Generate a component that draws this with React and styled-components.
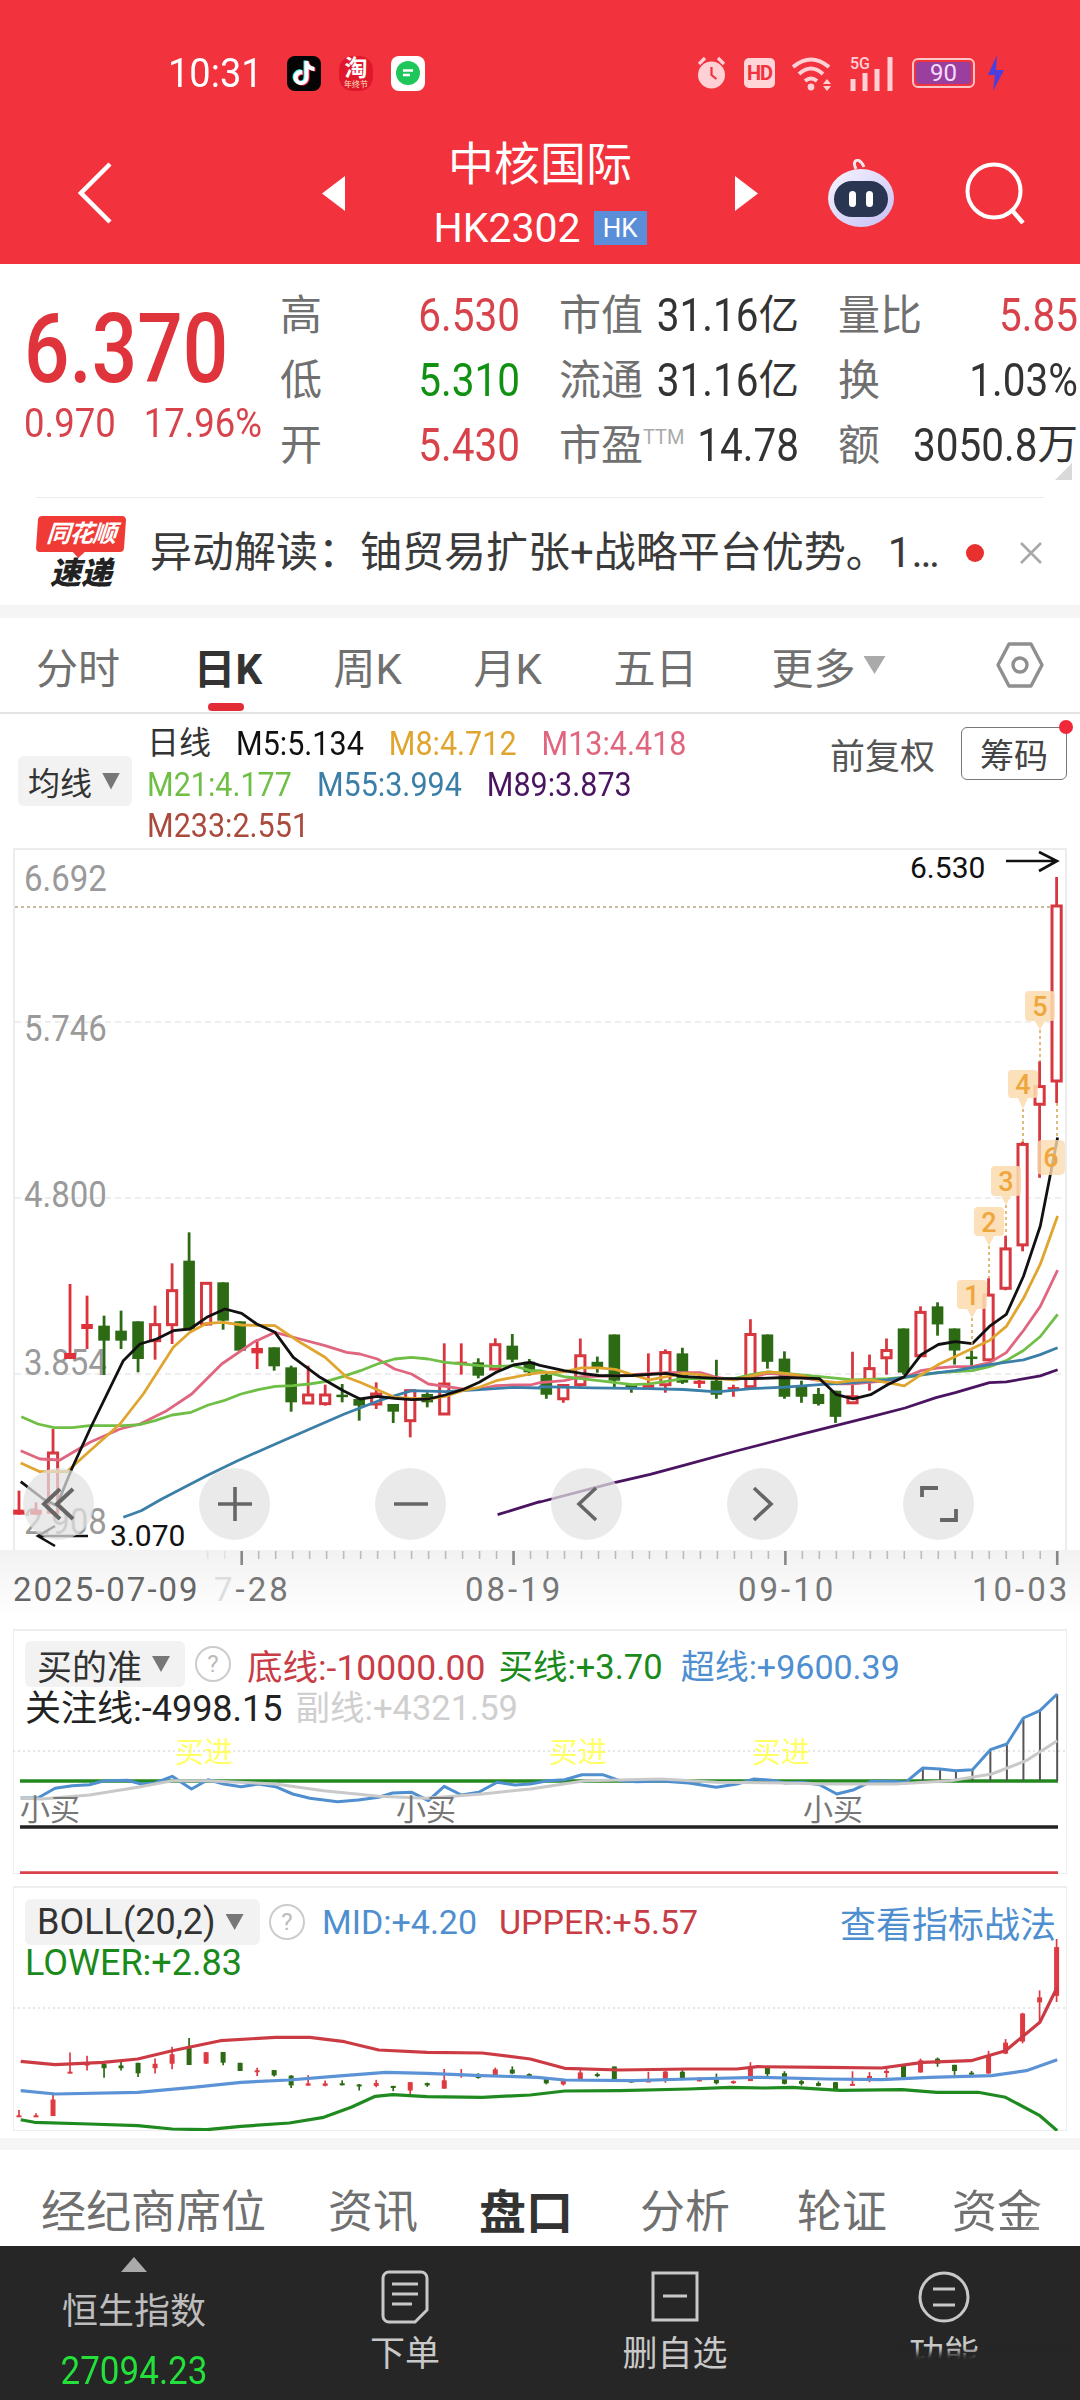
import React from "react";
import styled, { createGlobalStyle } from "styled-components";

const Global = createGlobalStyle`
  html, body { margin: 0; padding: 0; background: #fff; }
  body { font-family: Roboto, "Noto Sans CJK SC", sans-serif; }
  #root { width: 1080px; height: 2400px; }
  * { box-sizing: border-box; }
`;

const Page = styled.div`
  position: relative; width: 1080px; height: 2400px; overflow: hidden;
  display: flex; flex-direction: column; background: #fff;
`;

/* ---------- header ---------- */
const Header = styled.header`
  height: 264px; background: #f2323c; color: #fff; padding-top: 55px;
  display: flex; flex-direction: column; flex: none;
`;
const StatusBar = styled.div`
  display: flex; align-items: center; height: 36px; padding: 0 75px 0 168px;
`;
const Time = styled.span`
  width: 92px; margin-right: 27px; font-size: 38px; line-height: 36px; color: #fff;
  display: inline-block; transform: scaleY(1.08); white-space: nowrap;
`;
const AppTile = styled.div`
  width: ${p => p.$w || 34}px; height: 35px; border-radius: ${p => p.$r || 8}px; margin-right: ${p => p.$mr || 18}px;
  background: ${p => p.$bg}; display: flex; flex-direction: column; align-items: center; justify-content: center;
  flex: none; overflow: hidden;
`;
const TaoMain = styled.span`
  font-size: 23px; line-height: 24px; font-weight: 700; color: #fff;
`;
const TaoSub = styled.span`
  font-size: 8px; line-height: 8px; color: #ffe6c8; white-space: nowrap;
`;
const StatusRight = styled.div`
  margin-left: auto; display: flex; align-items: center;
`;
const StatusIcon = styled.svg`
  display: block; flex: none; margin-left: ${p => p.$ml || 0}px;
`;
const HdBadge = styled.span`
  width: 31px; height: 30px; margin-left: 17px; background: #ffd5d8; color: #f2323c; border-radius: 5px;
  font-size: 20px; font-weight: 700; display: flex; align-items: center; justify-content: center; letter-spacing: -1px;
`;
const Battery = styled.div`
  width: 63px; height: 30px; margin-left: 17px; border: 2px solid #ffc4c8; border-radius: 6px; padding: 2px;
  display: flex; position: relative;
`;
const BatteryFill = styled.span`
  flex: 1; background: #9a3f9e; border-radius: 3px; color: #f3dcff; font-size: 24px; line-height: 22px; text-align: center;
`;
const NavBar = styled.div`
  margin-top: 47px; display: flex; align-items: center; height: 110px; padding-left: 78px;
`;
const NavIcon = styled.svg`
  display: block; flex: none; margin-left: ${p => p.$ml || 0}px;
`;
const NavCenter = styled.div`
  width: 390px; display: flex; flex-direction: column; align-items: center; flex: none;
`;
const NavTitle = styled.div`
  font-size: 46px; line-height: 52px; color: #fff; white-space: nowrap;
`;
const NavSub = styled.div`
  margin-top: 18px; height: 40px; display: flex; align-items: center; gap: 13px;
`;
const Code = styled.span`
  font-size: 41px; color: #fff; display: inline-block; white-space: nowrap;
`;
const MarketTag = styled.span`
  width: 53px; height: 34px; background: #5b8ed8; color: #fff; font-size: 26px; line-height: 34px; text-align: center;
`;

/* ---------- quote ---------- */
const Quote = styled.section`
  position: relative; height: 233px; display: flex; flex: none;
`;
const PriceCol = styled.div`
  width: 280px; flex: none; padding: 46px 0 0 24px; display: flex; flex-direction: column;
`;
const BigPrice = styled.span`
  font-size: 80px; line-height: 80px; font-weight: 500; color: #e0343c; display: block;
  transform: scaleY(1.2); width: 205px; text-align: left;
`;
const ChangeRow = styled.div`
  margin-top: 14px; display: flex; gap: 28px; color: #d8434b; font-size: 36.5px; line-height: 40px;
`;
const Num = styled.span`
  display: inline-block; transform: scaleY(${p => p.$sy || 1.12}); white-space: nowrap;
`;
const StatGrid = styled.div`
  display: grid; grid-template-columns: 240px 240px 240px; column-gap: 39px;
  grid-auto-rows: 65px; padding-top: 19px;
`;
const Stat = styled.div`
  display: flex; align-items: center; justify-content: space-between; white-space: nowrap;
`;
const StatLabel = styled.span`
  font-size: 42px; line-height: 65px; color: #707070;
`;
const Ttm = styled.sup`
  font-size: 20px; color: #aaa; vertical-align: 16px; line-height: 0;
`;
const StatValue = styled.span`
  font-size: 40.5px; line-height: 65px; color: ${p => p.$c || "#333"}; display: inline-flex; align-items: center;
`;
const CornerMark = styled.svg`
  position: absolute; right: 8px; bottom: 17px; display: block;
`;
const Rule = styled.div`
  height: 1px; margin: 0 36px; background: #ececec; flex: none;
`;

/* ---------- news ---------- */
const News = styled.section`
  height: 107px; padding: 3px 0 0 37px; display: flex; align-items: center; flex: none;
`;
const Logo = styled.div`
  width: 88px; height: 74px; display: flex; flex-direction: column; align-items: center; flex: none;
`;
const LogoBubble = styled.div`
  position: relative; width: 88px; height: 36px; background: #ef3a36; border-radius: 4px; transform: skewX(-4deg);
  color: #fff; font-size: 24px; font-weight: 700; font-style: italic; line-height: 36px; text-align: center; letter-spacing: -1px;
  &::after { content: ""; position: absolute; left: 36px; top: 35px; width: 14px; height: 7px; background: #ef3a36;
    clip-path: polygon(0 0, 100% 0, 50% 100%); }
`;
const LogoWord = styled.div`
  margin-top: 6px; font-size: 31px; line-height: 32px; font-weight: 900; font-style: italic; color: #222;
`;
const NewsText = styled.div`
  margin-left: 25px; width: 795px; font-size: 42px; line-height: 50px; color: #3a3a3a; white-space: nowrap; flex: none;
`;
const RedDot = styled.span`
  width: 18px; height: 18px; border-radius: 50%; background: #e8302f; margin-left: 21px; flex: none;
`;
const CloseIcon = styled.svg`
  margin-left: 35px; display: block; flex: none;
`;
const Band = styled.div`
  height: ${p => p.$h || 13}px; background: ${p => p.$c || "#f5f5f5"}; flex: none;
`;

/* ---------- period tabs ---------- */
const PeriodTabs = styled.nav`
  height: 96px; flex: none; padding-left: 36px; border-bottom: 2px solid #e4e4e4;
  display: grid; grid-template-columns: 157.5px 140px 140px 140px 158px 224px 48px; align-items: center;
`;
const PeriodTab = styled.span`
  position: relative; height: 94px; display: flex; align-items: center; gap: 8px;
  font-size: 42px; color: ${p => p.$active ? "#333" : "#707070"}; font-weight: ${p => p.$active ? 700 : 400}; white-space: nowrap;
  ${p => p.$active && `&::after { content: ""; position: absolute; left: 14px; bottom: 1px; width: 36px; height: 8px;
    border-radius: 4px; background: #e22d37; }`}
`;
const Caret = styled.i`
  display: block; flex: none; width: ${p => p.$w || 18}px; height: ${p => p.$h || 16}px; background: ${p => p.$c || "#777"};
  clip-path: polygon(0 0, 100% 0, 50% 100%);
`;

/* ---------- MA legend ---------- */
const Legend = styled.section`
  height: 134px; flex: none; padding: 9px 13px 0 18px; display: flex;
`;
const Pill = styled.div`
  width: ${p => p.$w}px; height: ${p => p.$h || 46}px; background: #f2f2f2; border-radius: 6px; flex: none;
  margin-top: ${p => p.$mt || 0}px; padding-left: ${p => p.$pl || 12}px; gap: ${p => p.$gap || 10}px;
  display: flex; align-items: center; font-size: ${p => p.$fs || 34}px; color: #333; white-space: nowrap;
`;
const MaColumn = styled.div`
  margin-left: 15px; display: flex; flex-direction: column;
`;
const MaRow = styled.div`
  display: flex; align-items: center; gap: 25px; height: 41px; white-space: nowrap;
`;
const MaName = styled.span`
  font-size: 32px; color: #333; line-height: 41px;
`;
const Ma = styled.span`
  font-size: 30.5px; line-height: 41px; color: ${p => p.$c}; display: inline-block; transform: scaleY(1.07);
`;
const LegendRight = styled.div`
  margin-left: auto; margin-top: 4px; height: 53px; display: flex; align-items: center; gap: 26px;
`;
const LegendText = styled.span`
  font-size: 35px; color: #555; white-space: nowrap;
`;
const ChipButton = styled.span`
  position: relative; width: 106px; height: 53px; border: 1.5px solid #777; border-radius: 6px; font-size: 34px; color: #444;
  display: flex; align-items: center; justify-content: center;
  &::after { content: ""; position: absolute; right: -7px; top: -8px; width: 14px; height: 14px; border-radius: 50%; background: #f0283a; }
`;

/* ---------- charts ---------- */
const MainChart = styled.section`
  position: relative; height: 702px; margin: 0 13px; flex: none; box-shadow: inset 2px 2px 0 #ececec, inset -2px 0 0 #ececec;
`;
const ChartSvg = styled.svg`
  position: absolute; left: 0; top: 0; display: block;
`;
const ChartButtons = styled.div`
  position: absolute; left: 10px; bottom: 10px; display: flex; gap: 105px;
`;
const RoundButton = styled.span`
  width: 71px; height: 72px; border-radius: 50%; background: rgba(226, 226, 226, .72);
  display: flex; align-items: center; justify-content: center;
`;
const XAxis = styled.section`
  height: 79px; flex: none; background: linear-gradient(#f2f2f2, #fff 85%);
`;
const TickSvg = styled.svg`
  display: block;
`;
const DateRow = styled.div`
  padding-left: 13px; display: grid; grid-template-columns: 201px 251px 273px 234px auto;
  font-size: 33px; line-height: 48px; letter-spacing: 3px; color: #777; white-space: nowrap;
`;
const DateFirst = styled.span`
  color: #666; letter-spacing: 2px;
`;
const Faded = styled.span`
  color: #ddd;
`;
const SubPanel = styled.section`
  position: relative; height: 245px; margin: ${p => p.$mt || 0}px 13px 0; flex: none; padding: ${p => p.$pt || 12}px 0 0 12px;
  box-shadow: inset 0 2px 0 #eee, inset 1px 0 0 #eee, inset -1px 0 0 #eee, inset 0 -1px 0 #eee;
`;
const PanelRow = styled.div`
  position: relative; display: flex; align-items: center; white-space: nowrap; height: ${p => p.$h || 46}px;
`;
const HelpMark = styled.span`
  width: 36px; height: 36px; border-radius: 50%; border: 2.5px solid #ccc; color: #bbb; font-size: 24px; margin-left: ${p => p.$ml}px;
  display: flex; align-items: center; justify-content: center; flex: none;
`;
const Ind = styled.span`
  font-size: ${p => p.$fs || 35}px; color: ${p => p.$c}; margin-left: ${p => p.$ml || 0}px; white-space: nowrap;
`;
const IndLink = styled(Ind)`
  margin-left: auto; padding-right: 11px; font-size: 36px;
`;

/* ---------- bottom ---------- */
const BottomTabs = styled.nav`
  height: 96px; flex: none; padding: 30px 0 0 41px;
  display: grid; grid-template-columns: 287px 151px 161px 157px 155px auto; align-items: center;
`;
const BottomTab = styled.span`
  font-size: ${p => p.$active ? 47 : 45}px; line-height: 66px; white-space: nowrap; color: ${p => p.$active ? "#333" : "#707070"};
  font-weight: ${p => p.$active ? 700 : 400};
`;
const FadeTab = styled(BottomTab)`
  background: linear-gradient(100deg, #707070 55%, #cfcfcf 100%); -webkit-background-clip: text; background-clip: text; color: transparent;
`;
const Dock = styled.footer`
  position: relative; flex: 1; background: #262626; display: grid; grid-template-columns: 268px 274px 266px 272px;
`;
const DockItem = styled.div`
  display: flex; flex-direction: column; align-items: center; color: #c8c8c8; white-space: nowrap;
`;
const UpMark = styled.i`
  display: block; width: 26px; height: 15px; margin-top: 11px; background: #aaa; clip-path: polygon(50% 0, 100% 100%, 0 100%);
`;
const IndexName = styled.span`
  font-size: 36px; line-height: 44px; margin-top: 18px; color: #bdbdbd;
`;
const IndexValue = styled.span`
  font-size: 35px; line-height: 40px; margin-top: 18px; color: #24e03a; display: inline-block; transform: scaleY(1.12);
`;
const DockIcon = styled.svg`
  display: block; margin-top: 24px;
`;
const DockLabel = styled.span`
  font-size: 35px; line-height: 40px; margin-top: 11px;
`;
const Smudge = styled.div`
  position: absolute; right: 0; bottom: 0; width: 190px; height: 47px; background: #262626; filter: blur(3px);
`;

/* ---------- chart data ---------- */
const z4 = ([x, y]) => [x / 2.904, 1150 + y / 3];
const z5 = ([x, y]) => [540 + x / 2.904, 1000 + y / 2.489];
const z9 = ([x, y]) => [x / 3, 1280 + y / 3];
const z6 = ([x, y]) => [x / 1.452, 1620 + y / 3];
const z7 = ([x, y]) => [x / 1.452, 1890 + y / 3];
const toPts = a => a.map(p => p.map(v => v.toFixed(1)).join(",")).join(" ");

const ma5 = [
  ...[[62,608],[130,660],[170,680],[215,570],[270,450],[370,245],[420,195],[470,180],[520,155],[570,150],[620,115],[675,90],[725,103],[770,135],[825,160],[880,235],[960,295],[1030,335],[1080,360]].map(z9),
  ...[[1096,742],[1146,748],[1195,752],[1244,750],[1293,738],[1343,722],[1392,700],[1441,670],[1491,648],[1540,640]].map(z4),
  ...[[0,912],[70,925],[120,932],[170,937],[219,938],[268,937],[367,932],[417,940],[515,944],[613,945],[712,942],[812,945],[861,985],[910,995],[960,985],[1009,960],[1058,940],[1107,885],[1157,860],[1206,853],[1255,858],[1305,815],[1354,785],[1404,690],[1453,565],[1503,345]].map(z5),
];
const ma8 = [
  ...[[62,552],[120,578],[200,578],[270,515],[360,435],[430,345],[520,205],[570,160],[620,133],[670,130],[725,138],[825,140],[900,190],[975,235],[1040,295],[1080,310]].map(z9),
  ...[[1096,722],[1146,745],[1195,748],[1244,750],[1293,742],[1343,725],[1392,715],[1441,695],[1491,685],[1540,675]].map(z4),
  ...[[0,930],[70,928],[120,918],[170,918],[219,922],[268,935],[318,948],[367,940],[417,932],[466,935],[515,945],[564,948],[613,938],[663,928],[712,932],[762,938],[812,950],[861,955],[910,950],[960,948],[1009,955],[1058,963],[1107,935],[1157,910],[1206,890],[1255,870],[1305,850],[1354,815],[1404,745],[1453,660],[1503,540]].map(z5),
];
const ma13 = [
  ...[[62,515],[120,540],[180,543],[270,490],[360,450],[420,435],[500,395],[575,345],[665,255],[760,190],[825,160],[900,180],[975,200],[1040,220],[1080,225]].map(z9),
  ...[[1096,630],[1146,660],[1195,675],[1244,705],[1293,712],[1343,720],[1392,720],[1441,710],[1491,708],[1540,708]].map(z4),
  ...[[0,955],[70,950],[120,940],[219,938],[268,935],[367,930],[466,930],[515,942],[564,948],[663,932],[712,935],[812,950],[861,958],[910,958],[1009,950],[1058,942],[1107,925],[1157,918],[1206,915],[1255,915],[1305,905],[1354,880],[1404,825],[1453,765],[1503,675]].map(z5),
];
const ma21 = [
  ...[[62,803],[110,825],[157,836],[210,836],[260,830],[310,830],[360,830],[405,827],[450,815],[500,798],[555,790],[605,768],[650,755],[700,735],[750,722],[800,712],[849,710],[899,705],[948,697],[997,682],[1047,665],[1096,645],[1146,630],[1195,625],[1244,630],[1293,640],[1343,645],[1392,650],[1441,652],[1491,650],[1540,665]].map(z4),
  ...[[0,925],[70,940],[170,950],[268,960],[318,958],[417,945],[515,945],[564,945],[613,935],[663,928],[712,932],[812,940],[910,948],[1009,945],[1058,942],[1157,930],[1255,925],[1305,915],[1354,900],[1404,875],[1453,840],[1503,785]].map(z5),
];
const ma55 = [
  ...[[358,1105],[410,1085],[470,1050],[530,1018],[600,980],[690,935],[800,885],[900,840],[1000,795],[1100,755],[1195,725],[1293,728],[1392,722],[1491,715],[1568,717]].map(z4),
  ...[[0,965],[150,968],[318,970],[417,972],[515,978],[613,970],[712,966],[812,960],[910,955],[1009,948],[1107,935],[1206,925],[1305,910],[1404,898],[1453,885],[1503,868]].map(z5),
];
const ma89 = [
  ...[[1445,1097],[1568,1058]].map(z4),
  ...[[0,1252],[210,1205],[320,1183],[420,1160],[570,1125],[660,1105],[760,1083],[960,1040],[1060,1018],[1150,992],[1206,980],[1305,955],[1354,953],[1453,938],[1503,923]].map(z5),
];

const c4 = [
  [1025,1082,1097,1097,"f"],[1060,1082,1097,1097,"f"],[840,912,1090,1090,"h"],[405,612,630,630,"f"],[440,525,540,600,"f"],
  [500,530,575,678,"g"],[485,545,575,600,"g"],[517,517,630,670,"g"],[470,527,575,632,"h"],[343,425,527,585,"h"],
  [250,335,540,540,"g"],[400,403,525,530,"h"],[400,400,515,542,"g"],[517,517,605,605,"g"],[570,597,613,660,"f"],
  [595,595,652,665,"g"],[650,655,760,788,"g"],[650,738,762,762,"h"],[707,738,764,770,"h"],[705,737,741,760,"g"],
  [745,750,770,815,"g"],[700,735,765,780,"h"],[765,765,788,822,"g"],[725,725,815,865,"h"],[730,735,760,775,"g"],
  [583,705,795,795,"h"],[583,638,645,677,"f"],[628,640,680,688,"g"],[568,587,660,660,"h"],[555,590,632,640,"g"],[630,638,670,680,"g"],
];
const c5 = [
  [930,935,985,995,"g"],[960,962,995,1005,"h"],[845,888,960,965,"h"],[890,903,918,930,"g"],[835,835,950,968,"g"],
  [960,960,970,980,"g"],[882,960,968,970,"f"],[872,880,960,980,"h"],[868,882,955,958,"g"],[930,950,958,968,"f"],
  [898,950,985,995,"g"],[960,966,972,990,"f"],[797,835,965,965,"h"],[835,835,903,920,"g"],[877,895,990,995,"g"],
  [950,965,990,1005,"g"],[968,983,1008,1012,"g"],[975,975,1040,1055,"g"],[878,990,1005,1005,"h"],[885,920,950,975,"h"],
  [845,875,893,935,"h"],[820,820,930,935,"g"],[765,780,888,890,"h"],[755,765,810,838,"g"],[820,820,875,910,"g"],
  [875,890,895,915,"g"],[695,737,898,900,"h"],[590,622,720,725,"h"],[355,362,612,628,"h"],[155,218,262,445,"h"],
];
const y4 = y => 1150 + y / 3;
const y5 = y => 1000 + y / 2.489;
const candles = [
  ...c4.map(c => [y4(c[0]), y4(c[1]), y4(c[2]), y4(c[3]), c[4]]),
  ...c5.map(c => [y5(c[0]), y5(c[1]), y5(c[2]), y5(c[3]), c[4]]),
  [878, 907, 1082, 1104, "h"],
].map((c, i) => ({ x: 19 + 17.01 * i, hi: c[0], top: c[1], bot: c[2], lo: c[3], kind: c[4] }));

const RED = "#d7373f", GRN = "#2d6a14";

const Candle = ({ c }) => {
  const col = c.kind === "g" ? GRN : c.kind === "h" ? RED : "#e0303a";
  return (
    <g>
      <line x1={c.x} x2={c.x} y1={c.hi} y2={c.lo} stroke={col} strokeWidth="2.8" />
      {c.kind === "h"
        ? <rect x={c.x - 4.6} y={c.top} width="9.2" height={c.bot - c.top} fill="#fff" stroke={col} strokeWidth="3" />
        : <rect x={c.x - 5.8} y={c.top} width="11.6" height={Math.max(c.bot - c.top, 2.5)} fill={col} />}
    </g>
  );
};

const AxisText = ({ x, y, children }) => (
  <text transform={`translate(${x} ${y}) scale(1 1.12)`} fontSize="33" fill="#9a9a9a">{children}</text>
);

const badges = [
  { n: 1, x: 972, top: 1281, h: 29, tip: 1319, end: 1351 },
  { n: 2, x: 989, top: 1208, h: 29, tip: 1247, end: 1279 },
  { n: 3, x: 1006, top: 1167, h: 30, tip: 1206, end: 1237 },
  { n: 4, x: 1023, top: 1071, h: 28, tip: 1110, end: 1143 },
  { n: 5, x: 1040, top: 992, h: 30, tip: 1031, end: 1062 },
];

const Badge = ({ b }) => (
  <g>
    <line x1={b.x} x2={b.x} y1={b.tip} y2={b.end} stroke="#d9a44e" strokeWidth="1.5" strokeDasharray="3 3" />
    <path
      d={`M${b.x - 11} ${b.top}h22a4 4 0 0 1 4 4v${b.h - 8}a4 4 0 0 1-4 4h-6l-5 ${b.tip - b.top - b.h}-5 -${b.tip - b.top - b.h}h-6a4 4 0 0 1-4-4v-${b.h - 8}a4 4 0 0 1 4-4z`}
      fill="#fbdcb0" fillOpacity=".88"
    />
    <text x={b.x} y={b.top + b.h / 2 + 10} textAnchor="middle" fontSize="27" fontWeight="500" fill="#efa63c">{b.n}</text>
  </g>
);

const Line = ({ pts, c, w = 2.8 }) => (
  <polyline points={toPts(pts)} fill="none" stroke={c} strokeWidth={w} strokeLinejoin="round" strokeLinecap="butt" />
);

const MainSvg = () => (
  <ChartSvg width="1054" height="702" viewBox="13 849 1054 702">
    {[1023, 1199, 1375].map(y => (
      <line key={y} x1="15" x2="1065" y1={y} y2={y} stroke="#dedede" strokeWidth="1.2" strokeDasharray="6 4" />
    ))}
    <line x1="15" x2="1065" y1="908" y2="908" stroke="#c9bb9e" strokeWidth="2" strokeDasharray="3 3" />
    <AxisText x="24" y="892">6.692</AxisText>
    <AxisText x="24" y="1042">5.746</AxisText>
    <AxisText x="24" y="1208">4.800</AxisText>
    <AxisText x="24" y="1376">3.854</AxisText>
    <AxisText x="24" y="1535">2.908</AxisText>
    {candles.map((c, i) => <Candle key={i} c={c} />)}
    <Line pts={ma89} c="#4b1460" />
    <Line pts={ma13} c="#e0667f" />
    <Line pts={ma21} c="#6fbf47" />
    <Line pts={ma55} c="#3b7fa8" />
    <Line pts={ma8} c="#e0a52e" />
    <Line pts={ma5} c="#111" />
    {badges.map(b => <Badge key={b.n} b={b} />)}
    <line x1="1057" x2="1057" y1="1104" y2="1139" stroke="#d9a44e" strokeWidth="1.5" strokeDasharray="3 3" />
    <rect x="1037" y="1141" width="28" height="35" rx="5" fill="#fbdcb0" fillOpacity=".8" />
    <text x="1051" y="1168" textAnchor="middle" fontSize="27" fontWeight="500" fill="#efa63c">6</text>
    <text x="910" y="879" fontSize="30" fill="#111">6.530</text>
    <path d="M1006 862H1057M1039 853L1057 862L1039 872" fill="none" stroke="#111" strokeWidth="2.6" />
    <text x="110" y="1547" fontSize="30" fill="#111">3.070</text>
    <path d="M88 1537H38M55 1527L38 1537L55 1547" fill="none" stroke="#111" strokeWidth="2.6" />
  </ChartSvg>
);

const ticks = Array.from({ length: 49 }, (_, i) => 241.7 + 16.99 * i);
const majors = [0, 16, 32, 48];

const Ticks = () => (
  <TickSvg width="1080" height="16" viewBox="0 0 1080 16">
    {ticks.map((x, i) => {
      const m = majors.includes(i);
      return (
        <line key={i} x1={x} x2={x} y1="1" y2={m ? 15 : 9} stroke={m ? "#888" : "#bbb"} strokeWidth={m ? 2.6 : 1.6} />
      );
    })}
    {[224.7, 207.7].map(x => <line key={x} x1={x} x2={x} y1="1" y2="9" stroke="#e2e2e2" strokeWidth="1.6" />)}
  </TickSvg>
);

/* 买的准 */
const blueLine = [[30,537],[55,537],[80,508],[105,500],[130,497],[150,486],[185,484],[205,495],[225,492],[250,472],[278,510],[302,482],[325,495],[350,503],[375,495],[400,503],[425,525],[450,538],[490,548],[520,543],[550,535],[570,522],[598,520],[622,545],[645,502],[670,528],[695,520],[722,490],[748,498],[770,495],[795,485],[820,482],[845,467],[875,467],[900,485],[925,488],[960,486],[1000,492],[1040,505],[1070,495],[1095,480],[1120,484],[1140,492],[1165,490],[1190,497],[1215,525],[1240,512],[1265,487],[1290,487],[1315,490],[1340,447],[1365,450],[1388,455],[1412,452],[1438,392],[1462,375],[1486,297],[1510,275],[1535,225]];
const grayLine = [[30,537],[60,540],[130,528],[200,505],[250,485],[300,485],[400,495],[470,515],[550,532],[620,538],[700,525],[770,510],[850,485],[900,483],[960,480],[1040,490],[1140,492],[1200,495],[1300,495],[1380,485],[1440,465],[1490,425],[1535,365]];
const bars = [[1340,447],[1365,450],[1388,455],[1412,452],[1438,392],[1462,375],[1486,297],[1510,275],[1535,225]];

const BuySvg = () => (
  <ChartSvg width="1054" height="245" viewBox="13 1630 1054 245">
    <line x1="13" x2="1067" y1="1752" y2="1752" stroke="#ddd" strokeWidth="1.5" strokeDasharray="2 3" />
    <line x1="20" x2="1058" y1="1782" y2="1782" stroke="#23891f" strokeWidth="3.5" />
    <line x1="20" x2="1058" y1="1828" y2="1828" stroke="#222" strokeWidth="3.5" />
    <line x1="20" x2="1058" y1="1874" y2="1874" stroke="#d8434b" strokeWidth="3.5" />
    {bars.map(b => {
      const [x, y] = z6(b);
      return <line key={x} x1={x} x2={x} y1={y} y2="1782" stroke="#555" strokeWidth="2" />;
    })}
    <Line pts={blueLine.map(z6)} c="#4f8fd0" w="3" />
    <Line pts={grayLine.map(z6)} c="#c9c9c9" w="3" />
    {[175, 549, 752].map(x => (
      <text key={x} x={x} y="1764" fontSize="29" fill="#ffff66">买进</text>
    ))}
    {[20, 396, 803].map(x => (
      <text key={x} x={x} y="1821" fontSize="30" fill="#777">小买</text>
    ))}
  </ChartSvg>
);

/* BOLL */
const bollRed = [[30,517],[80,527],[150,520],[200,510],[250,485],[320,455],[400,445],[450,445],[500,458],[550,483],[620,490],[700,492],[770,510],[820,538],[900,543],[1000,540],[1070,540],[1100,533],[1200,535],[1280,537],[1340,520],[1410,515],[1460,485],[1510,400],[1535,295]];
const bollBlue = [[30,605],[80,615],[200,610],[280,595],[350,580],[420,573],[480,563],[560,550],[620,553],[700,560],[780,565],[820,573],[920,575],[1000,570],[1100,565],[1200,570],[1280,572],[1350,565],[1440,560],[1490,545],[1535,512]];
const bollGreen = [[30,692],[50,700],[130,705],[200,710],[250,720],[300,722],[350,712],[420,702],[470,685],[510,655],[545,622],[570,617],[620,623],[700,625],[770,618],[820,606],[900,605],[1000,600],[1060,595],[1110,597],[1150,595],[1220,604],[1310,602],[1360,610],[1420,610],[1460,625],[1510,680],[1535,725]];
const miniY = y => 1940 + (y - 878) * 0.2787;

const BollSvg = () => (
  <ChartSvg width="1054" height="245" viewBox="13 1887 1054 245">
    <line x1="13" x2="1067" y1="2009" y2="2009" stroke="#ddd" strokeWidth="1.5" strokeDasharray="2 3" />
    {candles.map((c, i) => {
      const col = c.kind === "g" ? GRN : "#dd3a42";
      return (
        <g key={i}>
          <line x1={c.x} x2={c.x} y1={miniY(c.hi)} y2={miniY(c.lo)} stroke={col} strokeWidth="1.7" />
          <rect x={c.x - 2.5} y={miniY(c.top)} width="5" height={Math.max(miniY(c.bot) - miniY(c.top), 2)} fill={col} />
        </g>
      );
    })}
    <Line pts={bollRed.map(z7)} c="#cc3b44" w="3.2" />
    <Line pts={bollBlue.map(z7)} c="#5b93d6" w="3.2" />
    <Line pts={bollGreen.map(z7)} c="#1f8a1f" w="3.2" />
  </ChartSvg>
);

const TIKTOK = "M12.525.02c1.31-.02 2.61-.01 3.91-.02.08 1.53.63 3.09 1.75 4.17 1.12 1.11 2.7 1.62 4.24 1.79v4.03c-1.44-.05-2.89-.35-4.2-.97-.57-.26-1.1-.59-1.62-.93-.01 2.92.01 5.84-.02 8.75-.08 1.4-.54 2.79-1.35 3.94-1.31 1.92-3.58 3.17-5.91 3.21-1.43.08-2.86-.31-4.08-1.03-2.02-1.19-3.44-3.37-3.65-5.71-.02-.5-.03-1-.01-1.49.18-1.9 1.12-3.72 2.58-4.96 1.66-1.44 3.98-2.13 6.15-1.72.02 1.48-.04 2.96-.04 4.44-.99-.32-2.15-.23-3.02.37-.63.41-1.11 1.04-1.36 1.75-.21.51-.15 1.07-.14 1.61.24 1.64 1.82 3.02 3.5 2.87 1.12-.01 2.19-.66 2.77-1.61.19-.33.4-.67.41-1.06.1-1.79.06-3.57.07-5.36.01-4.03-.01-8.05.02-12.07z";

const PINK = "#ffd0d4";

export default function App() {
  return (
    <Page>
      <Global />
      <Header>
        <StatusBar>
          <Time>10:31</Time>
          <AppTile $bg="#050505">
            <svg width="24" height="26" viewBox="0 0 24 24">
              <path d={TIKTOK} fill="#25f4ee" transform="translate(-1 -.6)" />
              <path d={TIKTOK} fill="#fe2c55" transform="translate(1 .6)" />
              <path d={TIKTOK} fill="#fff" />
            </svg>
          </AppTile>
          <AppTile $bg="#e0182c" $r={14}>
            <TaoMain>淘</TaoMain>
            <TaoSub>年终节</TaoSub>
          </AppTile>
          <AppTile $bg="#fff" $mr={0}>
            <svg width="26" height="26" viewBox="0 0 26 26">
              <circle cx="13" cy="13" r="12" fill="#1fc65a" />
              <path d="M8 10.5h10M8 15h7" stroke="#fff" strokeWidth="2.4" />
            </svg>
          </AppTile>
          <StatusRight>
            <StatusIcon width="31" height="36" viewBox="0 0 31 36">
              <circle cx="15.5" cy="20" r="13.5" fill={PINK} />
              <path d="M15.5 12v8l5 4" fill="none" stroke="#f2323c" strokeWidth="2.2" />
              <path d="M3 9L9 3M28 9L22 3" stroke={PINK} strokeWidth="3.2" />
            </StatusIcon>
            <HdBadge>HD</HdBadge>
            <StatusIcon $ml={16} width="43" height="36" viewBox="0 0 43 36">
              <path d="M2 12Q20-3 38 12M8 19Q20 8 32 19M14 26Q20 21 26 26" fill="none" stroke={PINK} strokeWidth="4" />
              <circle cx="20" cy="32" r="3.4" fill={PINK} />
              <path d="M36 24l4 5h-8zM32 31h8l-4 5z" fill={PINK} />
            </StatusIcon>
            <StatusIcon $ml={16} width="45" height="36" viewBox="0 0 45 36">
              <text x="0" y="14" fontSize="16" fontWeight="500" fill={PINK}>5G</text>
              <path d="M3 24v12M15 18v18M27 14v22M40 2v34" stroke={PINK} strokeWidth="5" fill="none" />
            </StatusIcon>
            <Battery><BatteryFill>90</BatteryFill></Battery>
            <StatusIcon $ml={12} width="18" height="36" viewBox="0 0 18 36">
              <path d="M10 0L1 20h7L6 36l11-21H9z" fill="#4a3fe0" />
            </StatusIcon>
          </StatusRight>
        </StatusBar>
        <NavBar>
          <NavIcon width="34" height="62" viewBox="0 0 34 62">
            <path d="M32 2L3 31l29 29" fill="none" stroke="#fff" strokeWidth="4.5" />
          </NavIcon>
          <NavIcon $ml={210} width="23" height="35" viewBox="0 0 23 35"><path d="M23 0v35L0 17.5z" fill="#fff" /></NavIcon>
          <NavCenter>
            <NavTitle>中核国际</NavTitle>
            <NavSub>
              <Code>HK2302</Code>
              <MarketTag>HK</MarketTag>
            </NavSub>
          </NavCenter>
          <NavIcon width="23" height="35" viewBox="0 0 23 35"><path d="M0 0v35l23-17.5z" fill="#fff" /></NavIcon>
          <NavIcon $ml={67} width="72" height="68" viewBox="0 0 72 68">
            <defs>
              <linearGradient id="robot" x1="0" y1="0" x2="1" y2="1">
                <stop offset="0" stopColor="#f7f5ff" />
                <stop offset="1" stopColor="#c6bff5" />
              </linearGradient>
            </defs>
            <path d="M31 10Q27 2 33 1Q37 3 39 8" fill="none" stroke="#f1e6ea" strokeWidth="3" />
            <ellipse cx="36" cy="39" rx="33" ry="29" fill="url(#robot)" />
            <rect x="9" y="22" width="54" height="36" rx="18" fill="#2a3552" />
            <rect x="24" y="32" width="7" height="16" rx="3.5" fill="#fff" />
            <rect x="41" y="32" width="7" height="16" rx="3.5" fill="#fff" />
          </NavIcon>
          <NavIcon $ml={68} width="60" height="62" viewBox="0 0 60 62">
            <circle cx="29" cy="29" r="26.5" fill="none" stroke="#fff" strokeWidth="4" />
            <path d="M46 47l12 14" stroke="#fff" strokeWidth="4.5" />
          </NavIcon>
        </NavBar>
      </Header>

      <Quote>
        <PriceCol>
          <BigPrice>6.370</BigPrice>
          <ChangeRow><Num>0.970</Num><Num>17.96%</Num></ChangeRow>
        </PriceCol>
        <StatGrid>
          <Stat><StatLabel>高</StatLabel><StatValue $c="#d8434b"><Num>6.530</Num></StatValue></Stat>
          <Stat><StatLabel>市值</StatLabel><StatValue><Num>31.16</Num>亿</StatValue></Stat>
          <Stat><StatLabel>量比</StatLabel><StatValue $c="#d8434b"><Num>5.85</Num></StatValue></Stat>
          <Stat><StatLabel>低</StatLabel><StatValue $c="#119111"><Num>5.310</Num></StatValue></Stat>
          <Stat><StatLabel>流通</StatLabel><StatValue><Num>31.16</Num>亿</StatValue></Stat>
          <Stat><StatLabel>换</StatLabel><StatValue><Num>1.03%</Num></StatValue></Stat>
          <Stat><StatLabel>开</StatLabel><StatValue $c="#d8434b"><Num>5.430</Num></StatValue></Stat>
          <Stat><StatLabel>市盈<Ttm>TTM</Ttm></StatLabel><StatValue><Num>14.78</Num></StatValue></Stat>
          <Stat><StatLabel>额</StatLabel><StatValue><Num>3050.8</Num>万</StatValue></Stat>
        </StatGrid>
        <CornerMark width="17" height="17" viewBox="0 0 17 17"><path d="M17 0v17H0z" fill="#d9d9d9" /></CornerMark>
      </Quote>
      <Rule />
      <News>
        <Logo>
          <LogoBubble>同花顺</LogoBubble>
          <LogoWord>速递</LogoWord>
        </Logo>
        <NewsText>异动解读：铀贸易扩张+战略平台优势。1…</NewsText>
        <RedDot />
        <CloseIcon width="24" height="24" viewBox="0 0 24 24">
          <path d="M2 2l20 20M22 2L2 22" stroke="#a8a8a8" strokeWidth="2.6" />
        </CloseIcon>
      </News>
      <Band />

      <PeriodTabs>
        <PeriodTab>分时</PeriodTab>
        <PeriodTab $active>日K</PeriodTab>
        <PeriodTab>周K</PeriodTab>
        <PeriodTab>月K</PeriodTab>
        <PeriodTab>五日</PeriodTab>
        <PeriodTab>更多<Caret $w={22} $h={18} $c="#aaa" /></PeriodTab>
        <svg width="48" height="48" viewBox="0 0 48 48">
          <path d="M13 3h22l11 21-11 21H13L2 24z" fill="none" stroke="#8f8f8f" strokeWidth="3.4" strokeLinejoin="round" />
          <circle cx="24" cy="24" r="7" fill="none" stroke="#8f8f8f" strokeWidth="3.4" />
        </svg>
      </PeriodTabs>

      <Legend>
        <Pill $w={114} $h={50} $mt={33} $pl={10} $fs={32}>均线<Caret $h={17} /></Pill>
        <MaColumn>
          <MaRow>
            <MaName>日线</MaName>
            <Ma $c="#111">M5:5.134</Ma>
            <Ma $c="#e0a52e">M8:4.712</Ma>
            <Ma $c="#e0667f">M13:4.418</Ma>
          </MaRow>
          <MaRow>
            <Ma $c="#6fbf47">M21:4.177</Ma>
            <Ma $c="#3b7fa8">M55:3.994</Ma>
            <Ma $c="#4b1460">M89:3.873</Ma>
          </MaRow>
          <MaRow>
            <Ma $c="#a94a3c">M233:2.551</Ma>
          </MaRow>
        </MaColumn>
        <LegendRight>
          <LegendText>前复权</LegendText>
          <ChipButton>筹码</ChipButton>
        </LegendRight>
      </Legend>

      <MainChart>
        <MainSvg />
        <ChartButtons>
          <RoundButton>
            <svg width="42" height="42" viewBox="0 0 42 42"><path d="M22 6L6 21l16 15M35 6L19 21l16 15" fill="none" stroke="#666" strokeWidth="4" /></svg>
          </RoundButton>
          <RoundButton>
            <svg width="36" height="36" viewBox="0 0 36 36"><path d="M1 18h34M18 1v34" stroke="#666" strokeWidth="3.6" /></svg>
          </RoundButton>
          <RoundButton>
            <svg width="36" height="36" viewBox="0 0 36 36"><path d="M1 18h34" stroke="#666" strokeWidth="3.6" /></svg>
          </RoundButton>
          <RoundButton>
            <svg width="22" height="36" viewBox="0 0 22 36"><path d="M20 2L3 18l17 16" fill="none" stroke="#666" strokeWidth="3.6" /></svg>
          </RoundButton>
          <RoundButton>
            <svg width="22" height="36" viewBox="0 0 22 36"><path d="M2 2l17 16L2 34" fill="none" stroke="#666" strokeWidth="3.6" /></svg>
          </RoundButton>
          <RoundButton>
            <svg width="38" height="38" viewBox="0 0 38 38"><path d="M2 12V3h16M36 24v11H20" fill="none" stroke="#666" strokeWidth="3.8" /></svg>
          </RoundButton>
        </ChartButtons>
      </MainChart>

      <XAxis>
        <Ticks />
        <DateRow>
          <DateFirst>2025-07-09</DateFirst>
          <span><Faded>7</Faded>-28</span>
          <span>08-19</span>
          <span>09-10</span>
          <span>10-03</span>
        </DateRow>
      </XAxis>

      <SubPanel>
        <BuySvg />
        <PanelRow>
          <Pill $w={160} $fs={35}>买的准<Caret /></Pill>
          <HelpMark $ml={10}>?</HelpMark>
          <Ind $c="#c83c46" $fs={35.5} $ml={16}>底线:-10000.00</Ind>
          <Ind $c="#1a8a1a" $fs={34.5} $ml={13}>买线:+3.70</Ind>
          <Ind $c="#4f8fd0" $fs={34} $ml={18}>超线:+9600.39</Ind>
        </PanelRow>
        <PanelRow $h={36}>
          <Ind $c="#222" $fs={36}>关注线:-4998.15</Ind>
          <Ind $c="#cfcfcf" $fs={34.5} $ml={13}>副线:+4321.59</Ind>
        </PanelRow>
      </SubPanel>

      <SubPanel $mt={12} $pt={13}>
        <BollSvg />
        <PanelRow>
          <Pill $w={235} $fs={36}>BOLL(20,2)<Caret /></Pill>
          <HelpMark $ml={9}>?</HelpMark>
          <Ind $c="#4f8fd0" $fs={34} $ml={17}>MID:+4.20</Ind>
          <Ind $c="#c83c46" $fs={34} $ml={22}>UPPER:+5.57</Ind>
          <IndLink $c="#4f8fd0">查看指标战法</IndLink>
        </PanelRow>
        <PanelRow $h={36}>
          <Ind $c="#1a8a1a" $fs={36}>LOWER:+2.83</Ind>
        </PanelRow>
      </SubPanel>

      <Band $h={7} $c="#fff" />
      <Band $h={12} />

      <BottomTabs>
        <BottomTab>经纪商席位</BottomTab>
        <BottomTab>资讯</BottomTab>
        <BottomTab $active>盘口</BottomTab>
        <BottomTab>分析</BottomTab>
        <BottomTab>轮证</BottomTab>
        <FadeTab>资金</FadeTab>
      </BottomTabs>

      <Dock>
        <DockItem>
          <UpMark />
          <IndexName>恒生指数</IndexName>
          <IndexValue>27094.23</IndexValue>
        </DockItem>
        <DockItem>
          <DockIcon width="48" height="54" viewBox="0 0 48 54">
            <path d="M8 2h32a6 6 0 0 1 6 6v32l-12 12H8a6 6 0 0 1-6-6V8a6 6 0 0 1 6-6z" fill="none" stroke="#c8c8c8" strokeWidth="3" />
            <path d="M11 14h26M11 24h26M11 34h20" stroke="#c8c8c8" strokeWidth="3" />
          </DockIcon>
          <DockLabel>下单</DockLabel>
        </DockItem>
        <DockItem>
          <DockIcon width="48" height="54" viewBox="0 0 48 54">
            <rect x="2" y="3" width="44" height="47" fill="none" stroke="#c8c8c8" strokeWidth="3" />
            <path d="M12 26h24" stroke="#c8c8c8" strokeWidth="3" />
          </DockIcon>
          <DockLabel>删自选</DockLabel>
        </DockItem>
        <DockItem>
          <DockIcon width="52" height="54" viewBox="0 0 52 54">
            <circle cx="26" cy="27" r="24" fill="none" stroke="#c8c8c8" strokeWidth="3" />
            <path d="M15 19h22M15 35h22" stroke="#c8c8c8" strokeWidth="3" />
          </DockIcon>
          <DockLabel>功能</DockLabel>
        </DockItem>
        <Smudge />
      </Dock>
    </Page>
  );
}
